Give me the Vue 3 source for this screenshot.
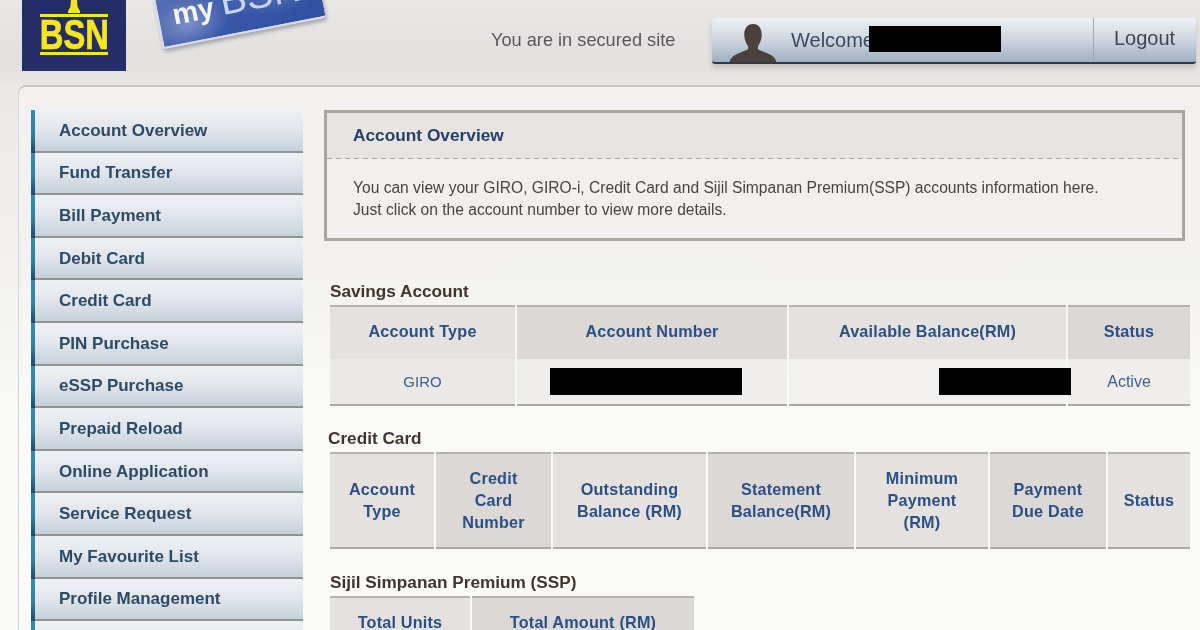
<script setup>
const menu = [
  'Account Overview',
  'Fund Transfer',
  'Bill Payment',
  'Debit Card',
  'Credit Card',
  'PIN Purchase',
  'eSSP Purchase',
  'Prepaid Reload',
  'Online Application',
  'Service Request',
  'My Favourite List',
  'Profile Management',
  '',
]

const cardHeads = [
  ['Account', 'Type'],
  ['Credit', 'Card', 'Number'],
  ['Outstanding', 'Balance (RM)'],
  ['Statement', 'Balance(RM)'],
  ['Minimum', 'Payment', '(RM)'],
  ['Payment', 'Due Date'],
  ['Status'],
]
</script>

<template>
  <div class="page">
    <header class="top">
      <div class="logo">
        <svg class="logo-mark" viewBox="0 0 14 13" width="14" height="13" aria-hidden="true">
          <path d="M4 0h6l.6 7L13 11v2H1v-2l2.400-4z" fill="#f5e61e" />
        </svg>
        <span class="logo-rule"></span>
        <span class="logo-text">BSN</span>
        <span class="logo-rule"></span>
      </div>
      <div class="card-wrap">
        <div class="card"><b>my</b><span>BSN</span></div>
      </div>
      <span class="secure">You are in secured site</span>
      <div class="userbar">
        <svg class="avatar" viewBox="0 0 48 39" width="48" height="38" aria-hidden="true">
          <path d="M24 0c6 0 9 5 9 11 0 5-2 9-4 12v3l12 5c4 2 6 4 7 8H0c1-4 3-6 7-8l12-5v-3c-2-3-4-7-4-12C15 5 18 0 24 0z" fill="#4a403c" />
        </svg>
        <span class="welcome">Welcome</span>
        <span class="mask mask-name"></span>
        <span class="logout">Logout</span>
      </div>
    </header>

    <div class="panel">
      <nav class="side">
        <a v-for="(item, i) in menu" :key="i" class="side-item">{{ item }}</a>
      </nav>

      <main class="main">
        <section class="intro">
          <h1>Account Overview</h1>
          <p>
            You can view your GIRO, GIRO-i, Credit Card and Sijil Simpanan Premium(SSP) accounts information here.<br />
            Just click on the account number to view more details.
          </p>
        </section>

        <h2 class="h-savings">Savings Account</h2>
        <div class="tbl savings">
          <div class="th">Account Type</div>
          <div class="th dark">Account Number</div>
          <div class="th">Available Balance(RM)</div>
          <div class="th dark">Status</div>
          <div class="td">GIRO</div>
          <div class="td alt"><span class="mask mask-acct"></span></div>
          <div class="td right"><span class="mask mask-bal"></span></div>
          <div class="td alt status">Active</div>
        </div>

        <h2 class="h-card">Credit Card</h2>
        <div class="tbl cards">
          <div v-for="(lines, i) in cardHeads" :key="i" class="th" :class="{ dark: i % 2 === 1 }">
            <span v-for="line in lines" :key="line">{{ line }}</span>
          </div>
        </div>

        <h2 class="h-ssp">Sijil Simpanan Premium (SSP)</h2>
        <div class="tbl ssp">
          <div class="th">Total Units</div>
          <div class="th dark">Total Amount (RM)</div>
        </div>
      </main>
    </div>
  </div>
</template>

<style scoped>
.page {
  width: 1200px;
  height: 630px;
  overflow: hidden;
  font-family: "Liberation Sans", Arial, sans-serif;
  background: linear-gradient(#e8e6e4 0, #eceae8 120px, #f9f9f8 420px);
  filter: blur(0.4px);
}

.top {
  height: 85px;
  display: flex;
  align-items: flex-start;
  background: linear-gradient(#e9e7e6, #e3e1df 70%, #e8e6e4);
  overflow: hidden;
}
.logo {
  margin-left: 22px;
  width: 104px;
  height: 71px;
  flex: none;
  background: #252d68;
  display: flex;
  flex-direction: column;
  align-items: center;
  box-sizing: border-box;
}
.logo-mark {
  display: block;
  margin-bottom: 1px;
}
.logo-rule {
  width: 68px;
  height: 3px;
  flex: none;
  background: #f5e61e;
}
.logo-text {
  font-size: 42px;
  line-height: 35px;
  height: 35px;
  flex: none;
  font-weight: 700;
  color: #f5e61e;
  -webkit-text-stroke: 0.7px #f5e61e;
  transform: scaleX(0.78);
}
.card-wrap {
  flex: none;
  margin-left: 30px;
  width: 170px;
  height: 50px;
}
.card {
  width: 166px;
  height: 56px;
  margin-top: -22px;
  box-sizing: border-box;
  padding: 3px 0 0 14px;
  background:
    radial-gradient(40px 26px at 28px 36px, rgba(170, 180, 220, 0.55), transparent),
    radial-gradient(50px 22px at 120px 22px, rgba(130, 150, 210, 0.35), transparent),
    linear-gradient(150deg, #5a72b4, #3757a8 55%, #2f50a0);
  border-bottom: 2px solid #d5dcec;
  border-left: 2px solid #d5dcec;
  box-shadow: 1px 3px 4px rgba(90, 90, 100, 0.45);
  border-radius: 3px;
  transform: rotate(-11deg);
  color: #f4f6fb;
  font-size: 29px;
  line-height: 34px;
}
.card span {
  font-weight: 400;
  font-size: 40px;
  margin-left: 7px;
  color: #c9d5ee;
}
.secure {
  margin-left: 165px;
  margin-top: 29px;
  font-size: 18.2px;
  line-height: 22px;
  color: #5b5560;
  flex: none;
  width: 221px;
}
.userbar {
  flex: none;
  width: 484px;
  height: 46px;
  margin-top: 18px;
  box-sizing: border-box;
  display: flex;
  align-items: flex-start;
  border-radius: 4px 4px 3px 3px;
  border-bottom: 2px solid #2e3a48;
  background: linear-gradient(#eef1f4, #c9d2dc 55%, #9fb0c2);
  box-shadow: 0 4px 5px rgba(150, 150, 150, 0.4);
}
.avatar {
  display: block;
  margin: 6px 0 0 17px;
  flex: none;
}
.welcome {
  margin: 10px -5px 0 14px;
  font-size: 20px;
  line-height: 24px;
  color: #3b4860;
}
.mask {
  display: block;
  background: #000;
}
.mask-name {
  width: 132px;
  height: 26px;
  margin: 8px 0 0 0;
}
.logout {
  margin-left: auto;
  width: 103px;
  height: 42px;
  box-sizing: border-box;
  padding: 8px 0 0 20px;
  border-left: 1px solid #9dabb9;
  font-size: 20px;
  line-height: 24px;
  color: #3e4650;
}

.panel {
  margin-left: 18px;
  height: 545px;
  box-sizing: border-box;
  padding: 23px 0 0 12px;
  display: flex;
  align-items: flex-start;
  overflow: hidden;
  background: linear-gradient(#f2f1ef, #f2f1ef 30%, #fafaf9 60%);
  border-top: 2px solid #c9c7c4;
  border-left: 1px solid #d6d4d1;
  border-top-left-radius: 8px;
}

.side {
  width: 272px;
  flex: none;
  display: flex;
  flex-direction: column;
}
.side-item {
  height: 42.6px;
  flex: none;
  box-sizing: border-box;
  padding: 0 0 1px 28px;
  display: flex;
  align-items: center;
  font-size: 17px;
  font-weight: 700;
  color: #2d4a66;
  background:
    linear-gradient(#2f8fae, #2b84a3 55%, #1c4a6c) left top / 4px 100% no-repeat,
    linear-gradient(#8f9395, #8f9395) left bottom / 100% 2px no-repeat,
    linear-gradient(#eff1f4, #e2e6ec 45%, #c3ced9);
}

.main {
  width: 866px;
  margin-left: 21px;
  flex: none;
  display: flex;
  flex-direction: column;
}
.intro {
  width: 861px;
  height: 131px;
  box-sizing: border-box;
  border: 3px solid #aaa59e;
  background: #f1f0ee;
}
.intro h1 {
  margin: 0;
  height: 46px;
  box-sizing: border-box;
  padding: 12px 0 0 26px;
  font-size: 17.3px;
  line-height: 20px;
  font-weight: 700;
  color: #23426a;
  background:
    repeating-linear-gradient(90deg, #a5a19c 0 5px, transparent 5px 9px) left bottom / 100% 1px no-repeat,
    #e7e4e1;
}
.intro p {
  margin: 0;
  padding: 18px 0 0 26px;
  font-size: 15.6px;
  line-height: 22px;
  color: #4a4340;
}

h2 {
  margin: 0;
  font-size: 17.2px;
  line-height: 20px;
  font-weight: 700;
  color: #40352f;
}
.h-savings {
  margin: 40px 0 4px 6px;
}
.h-card {
  margin: 22px 0 4px 4px;
}
.h-ssp {
  margin: 23px 0 4px 6px;
}

.tbl {
  display: grid;
  column-gap: 2px;
  margin-left: 6px;
  color: #2a5085;
}
.savings {
  width: 860px;
  grid-template-columns: 185px 270px 277px 122px;
  grid-template-rows: 54px 47px;
}
.cards {
  width: 860px;
  grid-template-columns: 104px 115px 153px 146px 132px 116px 82px;
  grid-template-rows: 97px;
}
.ssp {
  width: 364px;
  grid-template-columns: 140px 222px;
  grid-template-rows: 60px;
}
.th {
  display: flex;
  flex-direction: column;
  align-items: center;
  justify-content: center;
  text-align: center;
  box-sizing: border-box;
  font-size: 16.2px;
  line-height: 22px;
  font-weight: 700;
  letter-spacing: 0.2px;
  background: #e4e1df;
  border-top: 2px solid #b5b2ae;
}
.th.dark {
  background: #dcd8d6;
}
.savings .th {
  padding-bottom: 4px;
}
.cards .th {
  border-bottom: 2px solid #aaa7a4;
  padding-bottom: 1px;
}
.ssp .th {
  justify-content: flex-start;
  padding-top: 13px;
}
.td {
  display: flex;
  align-items: center;
  justify-content: center;
  box-sizing: border-box;
  font-size: 15px;
  color: #3d5f8c;
  background: #ebe9e7;
  border-bottom: 2px solid #aaa7a4;
}
.td.alt {
  background: #efeeec;
}
.td.status {
  font-size: 16px;
}
.td.right {
  justify-content: flex-end;
  background: #f2f1ef;
}
.mask-acct {
  width: 192px;
  height: 27px;
  margin-right: 12px;
}
.mask-bal {
  width: 132px;
  height: 27px;
  margin-right: -5px;
  position: relative;
  z-index: 1;
}
</style>

<style>
body {
  margin: 0;
  background: #f0efed;
}
</style>
